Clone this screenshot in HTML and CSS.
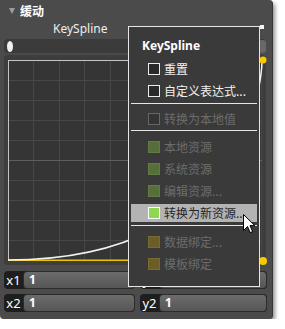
FILE: index.html
```html
<!DOCTYPE html>
<html>
<head>
<meta charset="utf-8">
<link rel="stylesheet" href="styles.css">
</head>
<body>
<div class="panel">
  <div class="hdr"><span class="tri"></span><span class="hdr-t">缓动</span></div>
  <div class="prop"><span class="prop-t">KeySpline</span><span class="mark"></span></div>
  <div class="track"><span class="thumb-l"></span><span class="thumb-r"></span></div>
  <div class="graph">
    <svg class="plot" width="263" height="210" viewBox="4 55 263 210">
      <rect x="8" y="60" width="254" height="200" fill="#353535"/>
      <g stroke="#474747" stroke-width="1">
        <line x1="33.5" y1="60" x2="33.5" y2="260"/>
        <line x1="59.5" y1="60" x2="59.5" y2="260"/>
        <line x1="84.5" y1="60" x2="84.5" y2="260"/>
        <line x1="110.5" y1="60" x2="110.5" y2="260"/>
        <line x1="160.5" y1="60" x2="160.5" y2="260"/>
        <line x1="186.5" y1="60" x2="186.5" y2="260"/>
        <line x1="211.5" y1="60" x2="211.5" y2="260"/>
        <line x1="237.5" y1="60" x2="237.5" y2="260"/>
        <line x1="261.5" y1="60" x2="261.5" y2="260"/>
        <line x1="8" y1="80.5" x2="262" y2="80.5"/>
        <line x1="8" y1="100.5" x2="262" y2="100.5"/>
        <line x1="8" y1="120.5" x2="262" y2="120.5"/>
        <line x1="8" y1="140.5" x2="262" y2="140.5"/>
        <line x1="8" y1="180.5" x2="262" y2="180.5"/>
        <line x1="8" y1="200.5" x2="262" y2="200.5"/>
        <line x1="8" y1="220.5" x2="262" y2="220.5"/>
        <line x1="8" y1="240.5" x2="262" y2="240.5"/>
      </g>
      <g stroke="#5e5e5e" stroke-width="1">
        <line x1="135.5" y1="60" x2="135.5" y2="260"/>
        <line x1="8" y1="160.5" x2="262" y2="160.5"/>
      </g>
      <g stroke="#c4c4c4" stroke-width="1">
        <line x1="8.5" y1="60" x2="8.5" y2="260"/>
        <line x1="8" y1="60.5" x2="262" y2="60.5"/>
      </g>
      <line x1="8" y1="260.25" x2="262" y2="260.25" stroke="#f5c400" stroke-width="1.5"/>
      <path d="M8,260 C262,260 262,60 262,60" fill="none" stroke="#f2f2f2" stroke-width="1.5"/>
      <circle cx="263" cy="60" r="3.5" fill="#f8c800"/>
      <circle cx="263" cy="261" r="4" fill="#f8c800"/>
    </svg>
  </div>
  <div class="fields">
    <div class="fld"><span class="lbl">x1</span><span class="inp">1</span></div>
    <div class="fld"><span class="lbl">y1</span><span class="inp">1</span></div>
    <div class="fld"><span class="lbl">x2</span><span class="inp">1</span></div>
    <div class="fld"><span class="lbl">y2</span><span class="inp">1</span></div>
  </div>

  <div class="menu">
    <div class="m-title">KeySpline</div>
    <div class="mi"><span class="cb"></span><span>重置</span></div>
    <div class="mi"><span class="cb"></span><span>自定义表达式...</span></div>
    <div class="sep sep1"></div>
    <div class="mi off"><span class="cb"></span><span>转换为本地值</span></div>
    <div class="sep sep2"></div>
    <div class="mi off"><span class="cb green"></span><span>本地资源</span></div>
    <div class="mi off"><span class="cb green"></span><span>系统资源</span></div>
    <div class="mi off"><span class="cb green"></span><span>编辑资源...</span></div>
    <div class="mi hot"><span class="cb lime"></span><span>转换为新资源...</span></div>
    <div class="sep sep3"></div>
    <div class="mi off"><span class="cb olive"></span><span>数据绑定...</span></div>
    <div class="mi off"><span class="cb olive"></span><span>模板绑定</span></div>
  </div>

  <svg class="cursor" width="13" height="20" viewBox="0 0 13 20">
    <path d="M0.5,0.5 L0.5,16.5 L4.5,12.5 L7.2,18.6 L9.6,17.6 L7,11.6 L11.8,11.6 Z" fill="#ffffff" stroke="#000000" stroke-width="1" stroke-linejoin="miter"/>
  </svg>
</div>
</body>
</html>
```

FILE: styles.css
```css
html, body {
  margin: 0;
  padding: 0;
  background: #ffffff;
}

.panel {
  position: relative;
  width: 273px;
  height: 319px;
  box-sizing: border-box;
  padding: 0 6px 0 4px;
  background: #4b4b4b;
  border-right: 1px solid #363636;
  border-radius: 0 4px 4px 4px;
  box-shadow: 2px 3px 4px rgba(0, 0, 0, 0.45);
  font-family: "Noto Sans CJK SC", "Noto Sans", sans-serif;
  font-size: 12px;
  color: #f2f2f2;
}

.hdr {
  height: 20px;
  display: flex;
  align-items: center;
}

.tri {
  width: 0;
  height: 0;
  border-left: 3px solid transparent;
  border-right: 3px solid transparent;
  border-top: 6px solid #9c9c9c;
  margin-left: 5px;
  margin-right: 5px;
  margin-top: 1px;
}

.hdr-t {
  font-weight: bold;
  font-size: 12px;
  line-height: 20px;
  color: #ffffff;
  margin-top: 2px;
}

.prop {
  height: 18px;
  display: flex;
  align-items: flex-start;
}

.prop-t {
  padding-left: 49px;
  font-family: "Noto Sans", sans-serif;
  font-size: 12px;
  line-height: 17px;
  color: #eeeeee;
}

.mark {
  width: 4px;
  height: 4px;
  background: #f4f4f4;
  margin-left: auto;
  margin-right: 2px;
  margin-top: 5px;
}

.track {
  margin-top: 1px;
  height: 14px;
  background: #3b3b3b;
  border-radius: 4px;
  display: flex;
  align-items: center;
  justify-content: space-between;
}

.thumb-l {
  width: 6px;
  height: 11px;
  border-radius: 50%;
  background: #f0f0f0;
  margin-left: 3px;
}

.thumb-r {
  width: 7px;
  height: 13px;
  border-radius: 3px;
  background: #686868;
}

.graph {
  margin-top: 2px;
  height: 210px;
  background: #3d3d3d;
  border-radius: 4px;
}

.plot {
  display: block;
  overflow: visible;
}

.fields {
  margin-top: 6px;
  display: grid;
  grid-template-columns: 131px 127px;
  grid-auto-rows: 18px;
  column-gap: 5px;
  row-gap: 5px;
}

.fld {
  display: flex;
  background: #1e1e1e;
  border-radius: 4px;
}

.lbl {
  width: 19px;
  text-align: center;
  font-family: "Noto Sans", sans-serif;
  font-size: 13px;
  line-height: 18px;
  color: #ffffff;
}

.inp {
  flex: 1;
  box-sizing: border-box;
  border-radius: 4px;
  border: 1px solid #2c2c2c;
  background: linear-gradient(#6c6c6c, #565656);
  padding-left: 5px;
  font-family: "Noto Sans", sans-serif;
  font-weight: bold;
  font-size: 12px;
  line-height: 16px;
  color: #ffffff;
}

/* context menu */
.menu {
  position: absolute;
  left: 128px;
  top: 26px;
  width: 132px;
  height: 261px;
  box-sizing: border-box;
  border: 1px solid #e6e6e6;
  background: #3a3a3a;
  display: flex;
  flex-direction: column;
}

.m-title {
  padding: 11px 0 4px 13px;
  font-family: "Noto Sans", sans-serif;
  font-weight: bold;
  font-size: 12px;
  line-height: 16px;
  color: #ffffff;
}

.mi {
  margin: 2px 2px;
  height: 18px;
  display: flex;
  align-items: center;
  padding-left: 17px;
  color: #f2f2f2;
  font-size: 12px;
  line-height: 18px;
}

.mi.off {
  color: #6c6c6c;
}

.mi.hot {
  background: #b3b3b3;
  color: #262626;
}

.cb {
  width: 12px;
  height: 12px;
  box-sizing: border-box;
  border: 1px solid #ececec;
  background: #2a2a2a;
  margin-right: 4px;
  flex: none;
}

.mi.off .cb {
  border-color: #676767;
  background: #343434;
}

.mi.off .cb.green {
  border-color: #647a46;
  background: #576d3a;
}

.mi.off .cb.olive {
  border-color: #7a6b30;
  background: #6a5d28;
}

.mi.hot .cb.lime {
  border-color: #ffffff;
  background: #8fd651;
}

.sep {
  height: 1px;
  background: #e6e6e6;
  margin: 0 2px;
}

.sep1 {
  margin-top: 1px;
  margin-bottom: 4px;
}

.sep2 {
  margin-top: 0;
  margin-bottom: 5px;
}

.sep3 {
  margin-top: 1px;
  margin-bottom: 5px;
}

.cursor {
  position: absolute;
  left: 243px;
  top: 214px;
}
```
